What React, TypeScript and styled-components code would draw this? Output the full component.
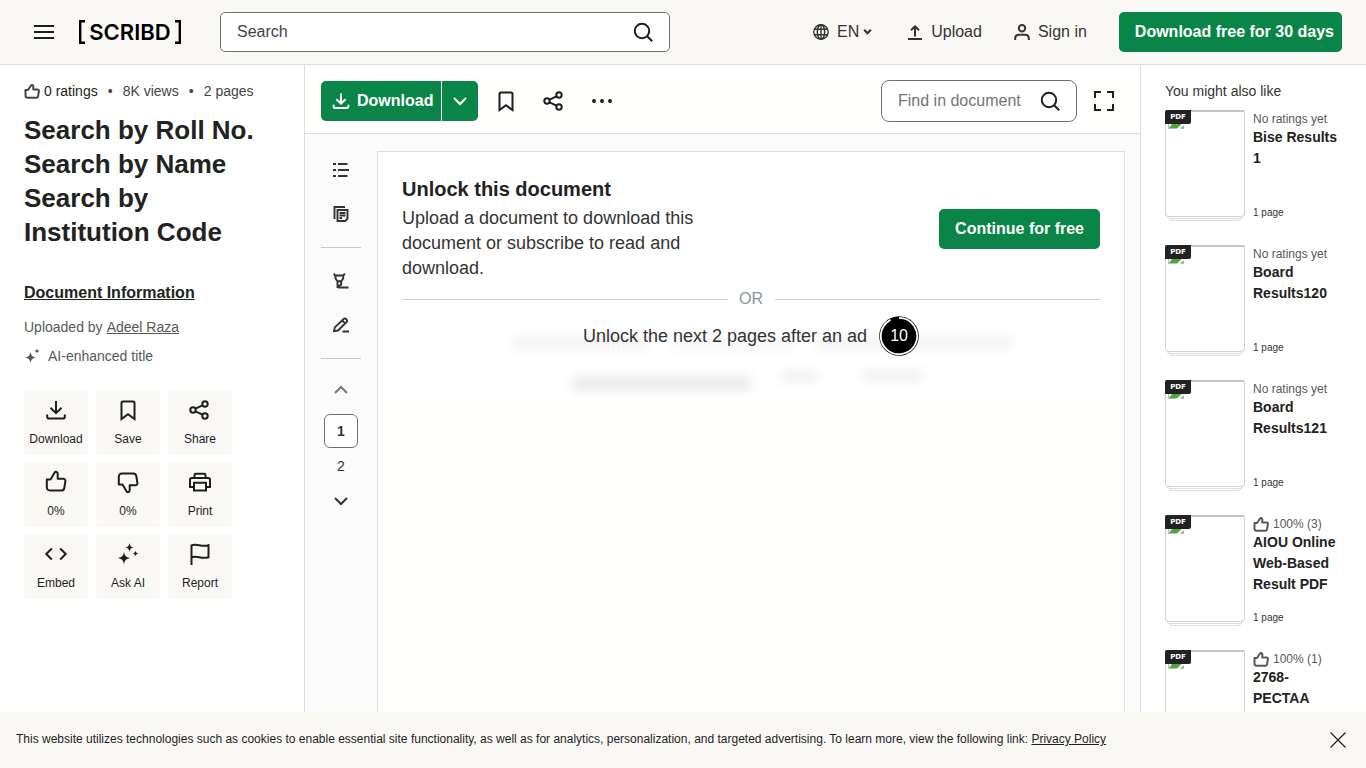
import React from "react";
import styled, { createGlobalStyle } from "styled-components";

const GlobalStyle = createGlobalStyle`
  *, *::before, *::after { box-sizing: border-box; }
  html, body { margin: 0; height: 100%; }
  body { font-family: "Liberation Sans", Arial, sans-serif; color: #1e1e1e; background: #fff; }
  button, input, select { font: inherit; color: inherit; }
  button { cursor: pointer; border: 0; background: none; padding: 0; }
  a { color: inherit; }
  h1, h2, h3, p, ul { margin: 0; padding: 0; }
  ul { list-style: none; }
  svg { display: block; flex: none; }
`;

const colors = {
  green: "#0a8548",
  cream: "#faf8f5",
  line: "#dcdde0",
  soft: "#57585a",
};

/* Icons */
type IconProps = { size?: number; box?: number; width?: number; children: React.ReactNode };
const Icon = ({ size = 24, box = 24, width = 2, children }: IconProps) => (
  <svg width={size} height={size} viewBox={`0 0 ${box} ${box}`} fill="none" stroke="currentColor" strokeWidth={width} aria-hidden="true">
    {children}
  </svg>
);
const DownloadIcon = ({ size = 24, width = 2 }: { size?: number; width?: number }) => (
  <Icon size={size} width={width}><path d="M12 3v12M6.5 9.8l5.5 5.4 5.5-5.4M3.2 16.5v2.2c0 1 .8 1.8 1.8 1.8h14c1 0 1.8-.8 1.8-1.8v-2.2" /></Icon>
);
const BookmarkIcon = () => (
  <Icon><path d="M5.5 21V5c0-.9.6-1.5 1.5-1.5h10c.9 0 1.5.6 1.5 1.5v16L12 16.3z" /></Icon>
);
const ShareIcon = () => (
  <Icon>
    <circle cx="5" cy="12" r="2.7" /><circle cx="17" cy="6" r="2.7" /><circle cx="17" cy="18" r="2.7" />
    <path d="M7.500 10.700l7-3.400M7.500 13.300l7 3.400" />
  </Icon>
);
const thumbPath =
  "M2.8 9.5h3.7l4-6.8c1-1.4 3.3-.9 3.2 1v5h5.5c1.5 0 2.4 1 2.2 2.4l-1.1 6.9c-.3 1.7-1.4 2.5-3 2.5H6c-2 0-3.200-1.200-3.200-3.200z";
const ThumbUpIcon = () => <Icon><path strokeLinejoin="round" d={thumbPath} /></Icon>;
const ThumbDownIcon = () => (
  <Icon><path strokeLinejoin="round" transform="translate(0 24) scale(1 -1)" d={thumbPath} /></Icon>
);
const SmallThumbIcon = () => (
  <Icon size={16} box={16}>
    <path strokeLinejoin="round" d="M1.500 7h2.500l2.700-4c.5-1.500 2.800-1.300 2.600.6V6.500h4.200c1 0 1.600.7 1.400 1.600l-.8 4.900c-.2 1.100-.9 1.700-1.900 1.700H3.900c-1.500 0-2.400-.9-2.400-2.300z" />
  </Icon>
);
const PrintIcon = () => (
  <Icon>
    <path d="M6.500 8V5c0-.8.5-1.3 1.3-1.3h8.4c.8 0 1.3.5 1.3 1.3v3M6 17H2V9.8C2 8.700 2.700 8 3.800 8h16.400c1.100 0 1.800.7 1.800 1.800V17h-4" />
    <path d="M6 12.8h12V20.500H6z" />
  </Icon>
);
const EmbedIcon = () => <Icon><path d="M7.800 6.500L2.300 12l5.500 5.500M16.200 6.500l5.500 5.500-5.500 5.500" /></Icon>;
const SparkleIcon = () => (
  <Icon width={0}>
    <path fill="currentColor" d="M8 9.5c.6 4 1.500 5.500 6 6.500-4.500 1-5.400 2.500-6 6.500-.6-4-1.500-5.500-6-6.500 4.500-1 5.400-2.500 6-6.500zM13.500 1c.5 2.800 1.200 3.900 4 4.500-2.800.6-3.500 1.700-4 4.500-.5-2.800-1.200-3.900-4-4.500 2.800-.6 3.500-1.700 4-4.500zM19.500 8.500c.3 1.800.9 2.700 3 3-2.100.4-2.700 1.200-3 3-.3-1.800-.9-2.600-3-3 2.100-.3 2.700-1.200 3-3z" />
  </Icon>
);
const TwoSparklesIcon = () => (
  <Icon size={16} box={16} width={0}>
    <path fill="currentColor" d="M6.500 4c.9 3.700 1.800 4.700 5.500 5.500-3.700.8-4.600 1.800-5.500 5.500C5.600 11.300 4.700 10.300 1 9.500 4.700 8.700 5.600 7.700 6.500 4zM13 .5c.4 1.500.9 2 2.500 2.500-1.600.5-2.100 1-2.500 2.500-.4-1.500-.9-2-2.500-2.500 1.600-.5 2.100-1 2.500-2.500z" />
  </Icon>
);
const FlagIcon = () => <Icon><path d="M3.500 23V3.500c5.500-2.500 9.500 2 17-.3v12c-7.500 2.300-11.500-2.200-17 .3" /></Icon>;
const SearchIcon = () => <Icon><circle cx="11" cy="11" r="7.200" /><path d="M16.200 16.200l5 5" /></Icon>;
const MenuIcon = () => <Icon><path d="M2 6h20M2 12h20M2 18h20" /></Icon>;
const GlobeIcon = () => (
  <Icon size={16} box={16} width={1.4}>
    <circle cx="8" cy="8" r="7.200" /><ellipse cx="8" cy="8" rx="3.700" ry="7.200" /><path d="M1.500 5.300h13M1.500 10.700h13M8 1v14" />
  </Icon>
);
const UploadIcon = () => <Icon size={16} box={16}><path d="M8 12.500V3M4 6.300L8 2.300l4 4M1 15h14" /></Icon>;
const PersonIcon = () => (
  <Icon size={16} box={16}><circle cx="8" cy="4.300" r="3.200" /><path d="M1.200 16v-1.500c0-2.400 1.400-3.700 3.800-3.700h6c2.400 0 3.800 1.300 3.800 3.700V16" /></Icon>
);
const Chevron = ({ up = false, size = 16, width = 2 }: { up?: boolean; size?: number; width?: number }) => (
  <Icon size={size} box={16} width={width}><path d={up ? "M2 11l6-6 6 6" : "M2 5l6 6 6-6"} /></Icon>
);
const DotsIcon = () => (
  <Icon width={0}><g fill="currentColor"><circle cx="4" cy="12" r="2" /><circle cx="12" cy="12" r="2" /><circle cx="20" cy="12" r="2" /></g></Icon>
);
const ExpandIcon = () => <Icon size={20} box={20}><path d="M1 7V1h6M13 1h6v6M19 13v6h-6M7 19H1v-6" /></Icon>;
const ListIcon = () => <Icon size={16} box={16}><path d="M0 2h3M5 2h9.500M0 8h3M5 8h11M0 14h3M5 14h9.500" /></Icon>;
const PagesIcon = () => (
  <Icon size={16} box={16} width={1.9}><path d="M1.500 13V1H12M4.500 4h10v8.600l-2.200 2.400H4.500zM6.500 7h6M6.500 9.500h6M6.500 12H9" /></Icon>
);
const HighlightIcon = () => (
  <Icon size={16} box={16} width={1.9}><path d="M.8.5L2 2.500h8.500L11.800.5M2.500 2.500v3l2 2.700h3.700l2-2.700v-3M4.500 8.200v5.500l3.700-2V8.200M5 14.500h10.500" /></Icon>
);
const PenIcon = () => (
  <Icon size={16} box={16} width={1.9}><path d="M1 14.200l.8-3.800L10.600 2c.7-.7 1.600-.7 2.300 0l.7.7c.7.7.7 1.600 0 2.300L5 13.500zM9.200 3.500l2.900 2.900M9.500 14.500H16" /></Icon>
);
const CloseIcon = () => <Icon size={16} box={16} width={1.2}><path d="M.5.5l15 15M15.500.5l-15 15" /></Icon>;
const MissingImage = () => (
  <svg width="16" height="16" viewBox="0 0 16 16" aria-hidden="true">
    <path fill="#b9bcbe" d="M0 0h16v16H0z" /><path fill="#e6eefb" d="M1 1h14v14H1z" />
    <path fill="#4ca739" d="M1 15l4-5h10v5z" /><path fill="#fff" d="M8.500 16L16 8.500V12l-4 4z" />
  </svg>
);

/* Page frame */
const Page = styled.div`
  display: flex;
  flex-direction: column;
  height: 100vh;
  overflow: hidden;
`;
const Header = styled.header`
  display: flex;
  align-items: center;
  flex: none;
  height: 65px;
  padding: 0 24px 1px 32px;
  background: ${colors.cream};
  border-bottom: 1px solid ${colors.line};
`;
const Logo = styled.a`
  display: flex;
  align-items: center;
  justify-content: space-between;
  width: 102px;
  height: 24px;
  margin: 0 39px 0 23px;
  color: #000;
  text-decoration: none;
  font: 600 22px/24px Inter, sans-serif;
`;
const SearchBox = styled.form<{ $compact?: boolean }>`
  display: flex;
  align-items: center;
  width: ${(p) => (p.$compact ? "196px" : "450px")};
  height: ${(p) => (p.$compact ? "42px" : "40px")};
  padding: 0 14px 0 16px;
  background: #fff;
  border: 1px solid #6f7073;
  border-radius: ${(p) => (p.$compact ? "8px" : "5px")};
  input {
    flex: 1;
    min-width: 0;
    padding: 0;
    border: 0;
    outline: 0;
    background: none;
    font-size: 16px;
  }
  input::placeholder { color: ${(p) => (p.$compact ? "#737477" : "#424347")}; opacity: 1; }
`;
const HeaderNav = styled.nav`
  display: flex;
  align-items: center;
  margin-left: auto;
  gap: 32px;
`;
const NavItem = styled.a`
  display: flex;
  align-items: center;
  gap: 8px;
  font-size: 16px;
  line-height: 24px;
  text-decoration: none;
  color: #333;
`;
const Language = styled.button`
  display: flex;
  align-items: center;
  gap: 8px;
  padding-right: 3px;
  font-size: 16px;
  line-height: 24px;
  color: #333;
  span { display: flex; align-items: center; gap: 4px; }
`;
const GreenButton = styled.button<{ $split?: "left" | "right" }>`
  display: flex;
  align-items: center;
  justify-content: center;
  gap: 6px;
  height: 40px;
  padding: ${(p) => (p.$split === "left" ? "0 8px 0 10px" : p.$split ? "0 10px" : "0 16px")};
  border-radius: ${(p) => (p.$split === "left" ? "5px 0 0 5px" : p.$split ? "0 5px 5px 0" : "5px")};
  background: ${colors.green};
  color: #fff;
  font-size: 16px;
  font-weight: 700;
  white-space: nowrap;
`;
const TrialButton = styled(GreenButton)`
  padding: 0 8px 0 16px;
`;
const Body = styled.div`
  display: flex;
  flex: 1;
  min-height: 0;
`;

/* Document details */
const Details = styled.aside`
  flex: none;
  width: 305px;
  padding: 16px 24px;
  border-right: 1px solid ${colors.line};
  overflow: hidden;
`;
const Stats = styled.p`
  display: flex;
  align-items: center;
  gap: 10px;
  font-size: 14px;
  line-height: 20px;
  color: #444;
`;
const Dot = styled.span`
  width: 5px;
  text-align: center;
`;
const Rating = styled.span`
  display: flex;
  align-items: center;
  gap: 4px;
  color: #222;
  svg { color: #444; }
`;
const Title = styled.h1`
  margin: 12px 0 32px;
  font-size: 26px;
  line-height: 34px;
  color: #222;
`;
const InfoLink = styled.a`
  display: block;
  margin-bottom: 12px;
  font-size: 16px;
  font-weight: 700;
  line-height: 24px;
  color: #222;
`;
const Meta = styled.p`
  display: flex;
  align-items: center;
  gap: 4px;
  margin-bottom: 9px;
  font-size: 14px;
  line-height: 20px;
  color: ${colors.soft};
`;
const EnhancedNote = styled(Meta)`
  gap: 8px;
  margin-bottom: 25px;
`;
const Tiles = styled.div`
  display: grid;
  grid-template-columns: repeat(3, 64px);
  gap: 8px;
`;
const Tile = styled.button`
  display: flex;
  flex-direction: column;
  align-items: center;
  gap: 9px;
  padding: 7px 0 8px;
  border-radius: 4px;
  background: ${colors.cream};
  font-size: 12px;
  line-height: 16px;
`;
const TileIcon = styled.span`
  display: flex;
  align-items: center;
  height: 24px;
`;

/* Reader */
const Reader = styled.main`
  display: flex;
  flex-direction: column;
  flex: 1;
  min-width: 0;
  background: #fbfbfc;
`;
const Toolbar = styled.div`
  display: flex;
  align-items: center;
  flex: none;
  height: 69px;
  padding: 4px 26px 0 16px;
  background: #fffffd;
  border-bottom: 1px solid ${colors.line};
`;
const SplitButton = styled.div`
  display: flex;
  gap: 1px;
`;
const ToolIcons = styled.div`
  display: flex;
  gap: 24px;
  margin-left: 16px;
`;
const FindGroup = styled.div`
  display: flex;
  align-items: center;
  gap: 17px;
  margin-left: auto;
`;
const Workspace = styled.div`
  display: flex;
  flex: 1;
  min-height: 0;
  padding-right: 15px;
`;
const Rail = styled.div`
  display: flex;
  flex-direction: column;
  align-items: center;
  flex: none;
  width: 72px;
  padding-top: 14px;
  color: #333;
`;
const RailButton = styled.button<{ $h?: number }>`
  display: flex;
  align-items: center;
  justify-content: center;
  flex: none;
  width: 40px;
  height: ${(p) => p.$h ?? 44}px;
  font-size: 14px;
  &:disabled { color: #77787a; }
`;
const CurrentPage = styled.input`
  flex: none;
  width: 34px;
  height: 34px;
  margin-top: 4px;
  padding: 0;
  border: 1px solid #6f7073;
  border-radius: 6px;
  background: #fff;
  text-align: center;
  font-weight: 700;
  font-size: 14px;
`;
const Divider = styled.hr`
  flex: none;
  width: 40px;
  height: 1px;
  margin: 11px 0;
  border: 0;
  background: #c5c8cc;
`;
const Sheet = styled.section`
  position: relative;
  flex: 1;
  min-width: 0;
  margin-top: 17px;
  padding: 24px;
  border: 1px solid ${colors.line};
  border-bottom: 0;
  background: linear-gradient(#fff 248px, #fffffd 250px);
`;
const Unlock = styled.div`
  display: flex;
  align-items: center;
  justify-content: space-between;
  h2 { margin-bottom: 4px; font-size: 20px; line-height: 26px; color: #222; }
  p { max-width: 310px; font-size: 18px; line-height: 25px; color: #333; }
`;
const OrRow = styled.div`
  display: flex;
  align-items: center;
  gap: 12px;
  margin: 6px 0 5px;
  font-size: 16px;
  line-height: 24px;
  color: #8b95a1;
  &::before, &::after { content: ""; flex: 1; height: 1px; background: #c8ced4; }
`;
const AdRow = styled.div`
  position: relative;
  display: flex;
  align-items: center;
  justify-content: center;
  gap: 12px;
  font-size: 18px;
  line-height: 24px;
  color: #333;
`;
const Countdown = styled.span`
  display: grid;
  place-items: center;
  color: #fff;
  font-size: 16px;
  > * { grid-area: 1 / 1; }
`;
const Smudge = styled.span<{ $x: number; $y: number; $w: number; $h: number; $o: number }>`
  position: absolute;
  left: ${(p) => p.$x}%;
  top: ${(p) => p.$y}px;
  width: ${(p) => p.$w}%;
  height: ${(p) => p.$h}px;
  background: rgba(0, 0, 0, ${(p) => p.$o});
  filter: blur(6px);
`;

/* Suggestions */
const Suggestions = styled.aside`
  flex: none;
  width: 226px;
  padding: 16px 24px;
  border-left: 1px solid ${colors.line};
  overflow: hidden;
  h2 { margin-bottom: 9px; font-size: 14px; font-weight: 400; line-height: 20px; color: #333; }
  ul { display: grid; gap: 24px; }
`;
const Card = styled.li`
  display: grid;
  grid-template-columns: 80px 1fr;
  gap: 8px;
  min-height: 111px;
`;
const Thumb = styled.div`
  position: relative;
  height: 107px;
  padding: 1px 2px;
  border: 1px solid #d0d2d4;
  border-top: 2px solid #c4c5c7;
  border-radius: 2px 2px 4px 4px;
  &::before, &::after {
    content: "";
    position: absolute;
    left: 1px;
    right: 1px;
    bottom: -3px;
    height: 3px;
    border: 1px solid #dcdee0;
    border-top: 0;
    border-radius: 0 0 4px 4px;
  }
  &::after { left: 3px; right: 3px; bottom: -5px; }
`;
const PdfBadge = styled.span`
  position: absolute;
  top: -2px;
  left: -1px;
  width: 26px;
  border-radius: 2px 0 2px 0;
  background: #222;
  color: #fff;
  font-family: "DejaVu Sans", sans-serif;
  font-size: 7px;
  font-weight: 700;
  line-height: 14px;
  text-align: center;
`;
const CardText = styled.div`
  display: flex;
  flex-direction: column;
  padding-top: 1px;
  h3 { font-size: 14px; line-height: 21px; color: #222; }
  small { margin-top: auto; font-size: 10px; line-height: 16px; color: #333; }
`;
const CardRating = styled.p`
  display: flex;
  align-items: center;
  gap: 4px;
  font-size: 12px;
  line-height: 16px;
  color: ${colors.soft};
`;

const CookieBar = styled.footer`
  display: flex;
  align-items: center;
  justify-content: space-between;
  flex: none;
  min-height: 56px;
  padding: 0 20px 0 16px;
  background: ${colors.cream};
  font-size: 12px;
  line-height: 16px;
  p { margin-bottom: 2px; }
`;

const tiles = [
  { label: "Download", icon: <DownloadIcon /> },
  { label: "Save", icon: <BookmarkIcon /> },
  { label: "Share", icon: <ShareIcon /> },
  { label: "0%", icon: <ThumbUpIcon />, name: "Like" },
  { label: "0%", icon: <ThumbDownIcon />, name: "Dislike" },
  { label: "Print", icon: <PrintIcon /> },
  { label: "Embed", icon: <EmbedIcon /> },
  { label: "Ask AI", icon: <SparkleIcon /> },
  { label: "Report", icon: <FlagIcon /> },
];

const suggestions = [
  { title: "Bise Results 1", pages: "1 page" },
  { title: "Board Results120", pages: "1 page" },
  { title: "Board Results121", pages: "1 page" },
  { title: "AIOU Online Web-Based Result PDF", rating: "100% (3)", pages: "1 page" },
  { title: "2768-PECTAA", rating: "100% (1)" },
];

const smudges = [
  { $x: 18, $y: 185, $w: 18, $h: 11, $o: 0.06 },
  { $x: 39, $y: 185, $w: 17, $h: 11, $o: 0.04 },
  { $x: 59, $y: 185, $w: 26, $h: 11, $o: 0.06 },
  { $x: 26, $y: 225, $w: 24, $h: 13, $o: 0.09 },
  { $x: 54, $y: 220, $w: 5, $h: 9, $o: 0.08 },
  { $x: 65, $y: 219, $w: 8, $h: 9, $o: 0.08 },
];

export default function App() {
  return (
    <Page>
      <GlobalStyle />
      <Header>
        <button aria-label="Menu"><MenuIcon /></button>
        <Logo href="#" aria-label="Scribd">
          <svg width="6" height="24" viewBox="0 0 6 24" fill="none" stroke="currentColor" strokeWidth="2.4"><path d="M6 1.200H1.200v21.600H6" /></svg>
          <span>SCRIBD</span>
          <svg width="6" height="24" viewBox="0 0 6 24" fill="none" stroke="currentColor" strokeWidth="2.4"><path d="M0 1.200h4.800v21.600H0" /></svg>
        </Logo>
        <SearchBox role="search">
          <input type="text" aria-label="Search" placeholder="Search" />
          <button type="button" aria-label="Submit search"><SearchIcon /></button>
        </SearchBox>
        <HeaderNav>
          <Language><GlobeIcon /><span>EN<Chevron size={9} width={4} /></span></Language>
          <NavItem href="#"><UploadIcon />Upload</NavItem>
          <NavItem href="#"><PersonIcon />Sign in</NavItem>
          <TrialButton>Download free for 30 days</TrialButton>
        </HeaderNav>
      </Header>
      <Body>
        <Details>
          <Stats>
            <Rating><SmallThumbIcon />0 ratings</Rating>
            <Dot>•</Dot><span>8K views</span><Dot>•</Dot><span>2 pages</span>
          </Stats>
          <Title>Search by Roll No. Search by Name Search by Institution Code</Title>
          <InfoLink href="#">Document Information</InfoLink>
          <Meta>Uploaded by <a href="#">Adeel Raza</a></Meta>
          <EnhancedNote><TwoSparklesIcon />AI-enhanced title</EnhancedNote>
          <Tiles>
            {tiles.map((t, i) => (
              <Tile key={i} aria-label={t.name}><TileIcon>{t.icon}</TileIcon>{t.label}</Tile>
            ))}
          </Tiles>
        </Details>
        <Reader>
          <Toolbar>
            <SplitButton>
              <GreenButton $split="left"><DownloadIcon size={20} width={2.4} />Download</GreenButton>
              <GreenButton $split="right" aria-label="More download options"><Chevron /></GreenButton>
            </SplitButton>
            <ToolIcons>
              <button aria-label="Save"><BookmarkIcon /></button>
              <button aria-label="Share"><ShareIcon /></button>
              <button aria-label="More"><DotsIcon /></button>
            </ToolIcons>
            <FindGroup>
              <SearchBox $compact role="search">
                <input type="text" aria-label="Find in document" placeholder="Find in document" />
                <button type="button" aria-label="Find"><SearchIcon /></button>
              </SearchBox>
              <button aria-label="Fullscreen"><ExpandIcon /></button>
            </FindGroup>
          </Toolbar>
          <Workspace>
            <Rail>
              <RailButton aria-label="Outline"><ListIcon /></RailButton>
              <RailButton aria-label="Pages"><PagesIcon /></RailButton>
              <Divider />
              <RailButton aria-label="Highlight"><HighlightIcon /></RailButton>
              <RailButton aria-label="Annotate"><PenIcon /></RailButton>
              <Divider />
              <RailButton $h={40} disabled aria-label="Previous page"><Chevron up /></RailButton>
              <CurrentPage type="text" aria-label="Current page" defaultValue="1" />
              <RailButton $h={36}>2</RailButton>
              <RailButton $h={34} aria-label="Next page"><Chevron /></RailButton>
            </Rail>
            <Sheet>
              {smudges.map((s, i) => <Smudge key={i} {...s} />)}
              <Unlock>
                <div>
                  <h2>Unlock this document</h2>
                  <p>Upload a document to download this document or subscribe to read and download.</p>
                </div>
                <GreenButton>Continue for free</GreenButton>
              </Unlock>
              <OrRow>OR</OrRow>
              <AdRow>
                <span>Unlock the next 2 pages after an ad</span>
                <Countdown>
                  <svg width="40" height="40" viewBox="0 0 40 40" aria-hidden="true">
                    <circle cx="20" cy="20" r="19.8" fill="#000" />
                    <path d="M20 1.8A18.2 18.2 0 1 1 11.5 3.9" fill="none" stroke="#fff" strokeWidth="1.8" />
                  </svg>
                  <span>10</span>
                </Countdown>
              </AdRow>
            </Sheet>
          </Workspace>
        </Reader>
        <Suggestions>
          <h2>You might also like</h2>
          <ul>
            {suggestions.map((s) => (
              <Card key={s.title}>
                <Thumb><MissingImage /><PdfBadge>PDF</PdfBadge></Thumb>
                <CardText>
                  <CardRating>
                    {s.rating ? <><SmallThumbIcon />{s.rating}</> : "No ratings yet"}
                  </CardRating>
                  <h3>{s.title}</h3>
                  {s.pages && <small>{s.pages}</small>}
                </CardText>
              </Card>
            ))}
          </ul>
        </Suggestions>
      </Body>
      <CookieBar>
        <p>
          This website utilizes technologies such as cookies to enable essential site functionality, as well as for analytics, personalization, and targeted advertising. To learn more, view the following link: <a href="#">Privacy Policy</a>
        </p>
        <button aria-label="Close"><CloseIcon /></button>
      </CookieBar>
    </Page>
  );
}
